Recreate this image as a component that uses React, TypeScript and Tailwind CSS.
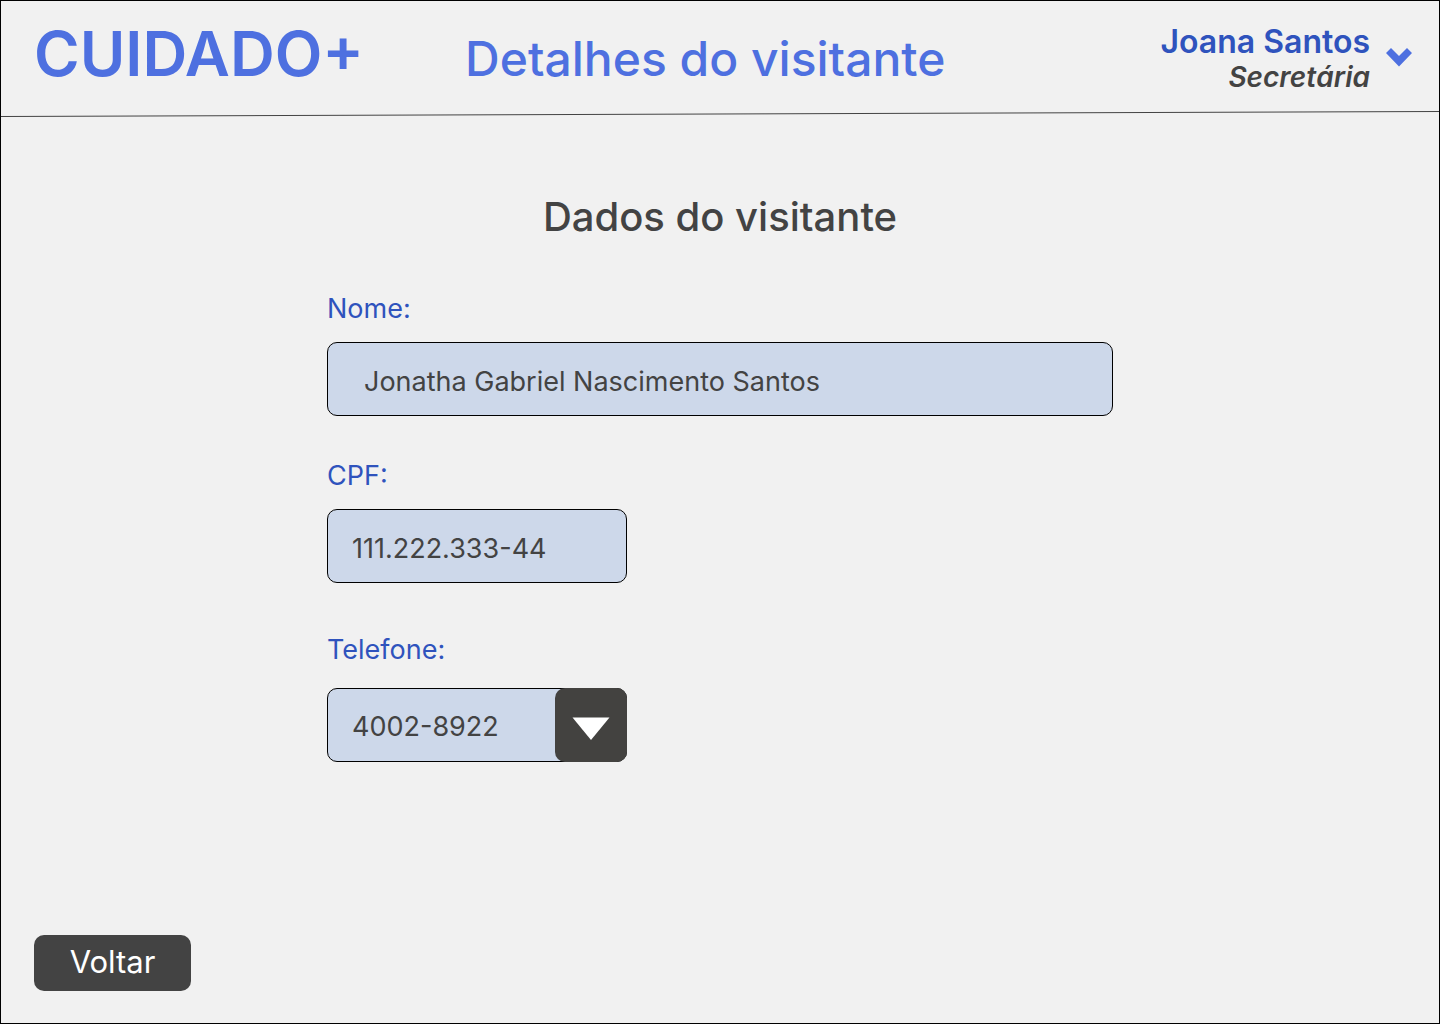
import type { ReactNode } from "react";

const fieldClass =
  "h-[74px] w-full appearance-none rounded-[10px] border border-black bg-[#cdd8ea] pt-1 text-[27px] text-[#434343] outline-none";

function Field({ id, label, className, children }: { id: string; label: string; className: string; children: ReactNode }) {
  return (
    <div className={`flex flex-col ${className}`}>
      <label htmlFor={id} className="text-[27px] leading-10 text-[#2f53bd]">
        {label}
      </label>
      {children}
    </div>
  );
}

function Header() {
  return (
    <header>
      <div className="flex h-[110px] items-start pr-[27px] pl-[33px]">
        <span className="pt-[13px] text-[62px] leading-[80px] font-semibold text-[#4e70e0]">CUIDADO+</span>
        <h1 className="ml-[101px] pt-7 text-[48px] leading-[60px] font-medium whitespace-nowrap text-[#4e70e0]">
          Detalhes do visitante
        </h1>
        <div className="ml-auto flex items-start gap-4 pt-[22px]">
          <div className="text-right font-semibold">
            <p className="text-[32px] leading-[38px] text-[#2f53bd]">Joana Santos</p>
            <p className="text-[28px] leading-8 text-[#434343] italic">Secretária</p>
          </div>
          <button type="button" aria-label="Abrir menu do usuário" className="mt-6">
            <svg width="26" height="20" viewBox="0 0 26 20" className="block">
              <path d="M0 6 L5 1 L13 9 L21 1 L26 6 L13 19.5 Z" fill="#4e70e0" />
            </svg>
          </button>
        </div>
      </div>
      <svg aria-hidden="true" viewBox="0 0 1438 6" preserveAspectRatio="none" className="block h-1.5 w-full">
        <line x1="0" y1="5.5" x2="1438" y2="0.5" stroke="#434343" />
      </svg>
    </header>
  );
}

export default function App() {
  return (
    <div className="flex min-h-screen flex-col border border-black bg-[#f1f1f1] font-['Inter',sans-serif]">
      <Header />
      <main className="flex flex-1 flex-col px-[33px] pt-[74px] pb-8">
        <h2 className="text-center text-[40px] leading-[52px] font-medium text-[#434343]">Dados do visitante</h2>
        <form className="mx-auto mt-[46px] flex w-full max-w-[786px] flex-col">
          <Field id="nome" label="Nome:" className="gap-[13px]">
            <input
              id="nome"
              type="text"
              readOnly
              defaultValue="Jonatha Gabriel Nascimento Santos"
              className={`${fieldClass} px-9`}
            />
          </Field>
          <Field id="cpf" label="CPF:" className="mt-10 w-[300px] gap-[13px]">
            <input id="cpf" type="text" readOnly defaultValue="111.222.333-44" className={`${fieldClass} px-6`} />
          </Field>
          <Field id="telefone" label="Telefone:" className="mt-[47px] w-[300px] gap-[18px]">
            <div className="relative">
              <select id="telefone" className={`${fieldClass} px-6`}>
                <option>4002-8922</option>
              </select>
              <span className="pointer-events-none absolute inset-y-0 right-0 flex w-[72px] items-center justify-center rounded-[10px] bg-[#434240] pt-2">
                <svg aria-hidden="true" width="38" height="24" viewBox="0 0 38 24">
                  <path d="M0.5 0.5H37.5L19 23Z" fill="#fff" />
                </svg>
              </span>
            </div>
          </Field>
        </form>
        <button
          type="button"
          className="mt-auto h-14 w-[157px] self-start rounded-[10px] bg-[#434343] pb-0.5 text-[31px] leading-10 text-white"
        >
          Voltar
        </button>
      </main>
    </div>
  );
}
